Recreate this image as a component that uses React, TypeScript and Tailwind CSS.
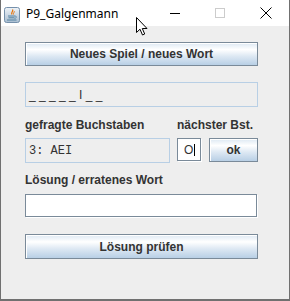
import React from "react";

function JavaIcon() {
  return (
    <svg width="16" height="16" viewBox="0 0 16 16">
      <defs>
        <linearGradient id="jg" x1="0" y1="0" x2="0" y2="1">
          <stop offset="0" stopColor="#eef3f8" />
          <stop offset="1" stopColor="#a9bdd0" />
        </linearGradient>
      </defs>
      <rect x="0.5" y="0.5" width="15" height="15" rx="2" fill="url(#jg)" stroke="#7590ab" />
      <path d="M8.5 2.5 C10 4 6.5 5 8 7.5" stroke="#e76f00" strokeWidth="1.2" fill="none" />
      <path d="M10 4 C11 5 9 6 9.5 7.5" stroke="#e76f00" strokeWidth="0.9" fill="none" />
      <path d="M4 9 H11" stroke="#5382a1" strokeWidth="1" />
      <path d="M4.5 10.8 H10.5" stroke="#5382a1" strokeWidth="1" />
      <path d="M11 9 C13 9 13 11 10.5 11.5" stroke="#5382a1" strokeWidth="0.8" fill="none" />
      <path d="M3 13 H12.5" stroke="#5382a1" strokeWidth="1" />
    </svg>
  );
}

function Cursor() {
  return (
    <svg width="13" height="20" viewBox="0 0 13 20" className="absolute left-[135px] top-[17px]">
      <path
        d="M0.5 0.5 L0.5 15.5 L4 12.2 L6.5 18 L8.7 17 L6.3 11.5 L11 11.5 Z"
        fill="#ffffff"
        stroke="#000000"
        strokeWidth="1"
        strokeLinejoin="miter"
      />
    </svg>
  );
}

const btn =
  "w-[233px] border border-[#7a8a99] shadow-[inset_1px_1px_0_#ffffff] bg-[linear-gradient(to_bottom,#dde8f3_0%,#ffffff_30%,#ffffff_30%,#dde8f3_60%,#b8cfe5_100%)] flex items-center justify-center text-[12px] leading-[14px] font-bold text-[#333333]";

export default function App() {
  return (
    <div className="relative w-[290px] h-[301px] bg-[#eeeeee] border-l border-r border-b-2 border-[#707070] flex flex-col font-['Liberation_Sans',Arial,sans-serif] overflow-hidden">
      {/* title bar */}
      <div className="h-[26px] bg-white flex items-center relative shrink-0">
        <div className="ml-[3px] mt-[3px]">
          <JavaIcon />
        </div>
        <span className="ml-[6px] text-[12px] leading-[14px] text-black font-['Noto_Sans',sans-serif] mt-[1px]">
          P9_Galgenmann
        </span>
        <div className="flex-1" />
        {/* minimize */}
        <div className="w-[10px] h-px bg-black mr-[35px] mt-[1px]" />
        {/* maximize */}
        <div className="w-[10px] h-[10px] border border-[#cccccc] mr-[35px]" />
        {/* close */}
        <svg width="12" height="12" viewBox="0 0 12 12" className="mr-[17px]">
          <path d="M0.5 0.5 L11.5 11.5 M11.5 0.5 L0.5 11.5" stroke="#000" strokeWidth="1" />
        </svg>
      </div>

      {/* content */}
      <div className="flex flex-col pl-[24px]">
        <div className={`${btn} mt-[16px] h-[24px]`}>Neues Spiel / neues Wort</div>

        <div className="mt-[16px] w-[233px] h-[25px] border border-[#b8cfe5] flex items-center pl-[3px] text-[12px] leading-[14px] text-[#333333] whitespace-pre">
          _ _ _ _ _ I _ _
        </div>

        <div className="mt-[11px] flex text-[12px] leading-[14px] font-bold text-[#333333]">
          <span className="w-[152px]">gefragte Buchstaben</span>
          <span>nächster Bst.</span>
        </div>

        <div className="mt-[6px] flex items-start">
          <div className="w-[145px] h-[25px] border border-[#b8cfe5] flex items-center pl-[3px] text-[12px] leading-[14px] text-[#333333] font-['Liberation_Mono',monospace] whitespace-pre">
            3: AEI
          </div>
          <div className="ml-[7px] w-[24px] h-[23px] bg-white border border-[#7a8a99] shadow-[1px_1px_0_#ffffff] flex items-center pl-[6px] text-[12px] leading-[14px] text-[#333333]">
            <span>O</span>
            <span className="w-px h-[12px] bg-black ml-[1px]" />
          </div>
          <div className={`ml-[8px] !w-[49px] h-[24px] border border-[#7a8a99] shadow-[inset_1px_1px_0_#ffffff] bg-[linear-gradient(to_bottom,#dde8f3_0%,#ffffff_30%,#ffffff_30%,#dde8f3_60%,#b8cfe5_100%)] flex items-center justify-center text-[12px] leading-[14px] font-bold text-[#333333]`}>
            ok
          </div>
        </div>

        <div className="mt-[10px] text-[12px] leading-[14px] font-bold text-[#333333]">
          Lösung / erratenes Wort
        </div>

        <div className="mt-[7px] w-[232px] h-[23px] bg-white border border-[#7a8a99] shadow-[1px_1px_0_#ffffff]" />

        <div className={`${btn} mt-[17px] h-[25px]`}>Lösung prüfen</div>
      </div>

      <Cursor />
    </div>
  );
}
